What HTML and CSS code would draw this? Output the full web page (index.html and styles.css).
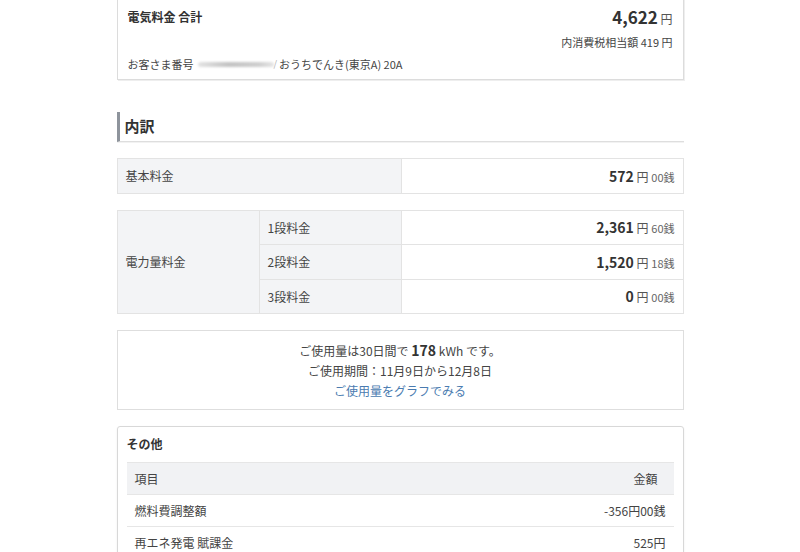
FILE: index.html
```html
<!DOCTYPE html>
<html lang="ja">
<head>
<meta charset="utf-8">
<link rel="stylesheet" href="styles.css">
</head>
<body>
<main class="page">
  <section class="total-card">
    <div class="total-row">
      <span class="total-title">電気料金 合計</span>
      <span class="total-amount"><b>4,622</b> <span class="yen">円</span></span>
    </div>
    <div class="tax-row">内消費税相当額 419 円</div>
    <div class="customer-row">お客さま番号<span class="blur"></span><span class="slash">/</span>おうちでんき(東京A) 20A</div>
  </section>

  <h2 class="section-title">内訳</h2>

  <table class="fee-table">
    <tr>
      <th class="col-wide">基本料金</th>
      <td class="amount"><b>572</b> <span class="yen">円</span> <span class="sen">00銭</span></td>
    </tr>
  </table>

  <table class="fee-table">
    <tr>
      <th class="col-a" rowspan="3">電力量料金</th>
      <th class="col-b">1段料金</th>
      <td class="amount"><b>2,361</b> <span class="yen">円</span> <span class="sen">60銭</span></td>
    </tr>
    <tr>
      <th class="col-b">2段料金</th>
      <td class="amount"><b>1,520</b> <span class="yen">円</span> <span class="sen">18銭</span></td>
    </tr>
    <tr>
      <th class="col-b">3段料金</th>
      <td class="amount"><b>0</b> <span class="yen">円</span> <span class="sen">00銭</span></td>
    </tr>
  </table>

  <section class="usage-box">
    <p class="usage-line">ご使用量は30日間で <b>178</b> kWh です。</p>
    <p class="usage-line">ご使用期間：11月9日から12月8日</p>
    <p class="usage-line"><a class="usage-link" href="#">ご使用量をグラフでみる</a></p>
  </section>

  <section class="other-card">
    <h3 class="other-title">その他</h3>
    <table class="other-table">
      <tr class="other-head">
        <th class="left">項目</th>
        <th class="right">金額</th>
      </tr>
      <tr>
        <td class="left">燃料費調整額</td>
        <td class="right">-356円00銭</td>
      </tr>
      <tr>
        <td class="left">再エネ発電 賦課金</td>
        <td class="right">525円</td>
      </tr>
    </table>
  </section>
</main>
</body>
</html>
```

FILE: styles.css
```css
* { box-sizing: border-box; }
html, body {
  margin: 0;
  padding: 0;
  background: #fff;
}
body {
  font-family: "Noto Sans CJK JP", "Noto Sans", sans-serif;
  font-size: 12px;
  color: #333;
  overflow: hidden;
}
.page {
  width: 567px;
  margin: 0 auto;
}
.total-card {
  margin-top: -10px;
  border: 1px solid #dcdcdc;
  box-shadow: 1px 1px 0 #eee;
  padding: 10px 10px 4px 10px;
}
.total-row {
  display: flex;
  justify-content: space-between;
  align-items: center;
  height: 30px;
}
.total-title {
  font-weight: bold;
  font-size: 12px;
  color: #333;
}
.total-amount b {
  font-size: 17px;
  font-weight: bold;
  color: #333;
}
.yen {
  font-size: 12px;
  color: #555;
}
.tax-row {
  text-align: right;
  font-size: 11px;
  color: #444;
  height: 22px;
  line-height: 22px;
}
.customer-row {
  font-size: 11px;
  color: #444;
  height: 22px;
  line-height: 22px;
  display: flex;
  align-items: center;
}
.blur {
  display: inline-block;
  width: 76px;
  height: 5px;
  margin-left: 4px;
  border-radius: 3px;
  background: linear-gradient(90deg, #e4e4e4, #c4c4c4 40%, #cfcfcf 80%, #e6e6e6);
  filter: blur(1.2px);
}
.slash {
  color: #aaa;
  font-size: 9px;
  margin-right: 2px;
}
.section-title {
  margin: 32px 0 16px 0;
  padding: 4px 0 5px 5px;
  border-left: 3px solid #8e949c;
  border-bottom: 1px solid #dedede;
  box-shadow: 0 1px 0 #f2f2f2;
  font-size: 15px;
  font-weight: bold;
  color: #333;
  line-height: 20px;
}
.fee-table {
  width: 100%;
  border-collapse: collapse;
  margin-bottom: 16px;
  border: 1px solid #e0e0e0;
}
.fee-table th, .fee-table td {
  border: 1px solid #e3e3e3;
  height: 34.5px;
  padding: 0 8px;
  font-weight: normal;
  text-align: left;
  color: #444;
  font-size: 12px;
}
.fee-table th {
  background: #f3f4f6;
}
.col-wide { width: 284px; }
.col-a { width: 142px; }
.col-b { width: 142px; }
.fee-table td.amount {
  text-align: right;
  background: #fff;
}
.amount b {
  font-size: 14px;
  font-weight: bold;
  color: #333;
}
.sen {
  font-size: 11px;
  color: #666;
}
.usage-box {
  border: 1px solid #dedede;
  height: 80px;
  padding-top: 9px;
  text-align: center;
  margin-bottom: 16px;
}
.usage-line {
  margin: 0;
  height: 20.5px;
  line-height: 20.5px;
  color: #444;
  font-size: 12px;
}
.usage-line b {
  font-size: 14px;
  color: #333;
}
.usage-link {
  color: #4a7bb0;
  text-decoration: none;
}
.other-card {
  border: 1px solid #d8d8d8;
  border-radius: 3px;
  box-shadow: 0 1px 2px rgba(0,0,0,0.08);
  padding: 6px 9px 0 9px;
}
.other-title {
  margin: 0;
  font-size: 12px;
  font-weight: bold;
  line-height: 22px;
  height: 29px;
  color: #333;
}
.other-table {
  width: 100%;
  border-collapse: collapse;
}
.other-table th, .other-table td {
  height: 32px;
  font-weight: normal;
  color: #444;
  font-size: 12px;
  border-bottom: 1px solid #e6e6e6;
}
.other-head th {
  background: #f1f2f4;
  border-top: 1px solid #e6e6e6;
}
.other-table .left {
  text-align: left;
  padding-left: 8px;
}
.other-table .right {
  text-align: right;
  padding-right: 16px;
}
.other-table td.right { padding-right: 8px; }
```
